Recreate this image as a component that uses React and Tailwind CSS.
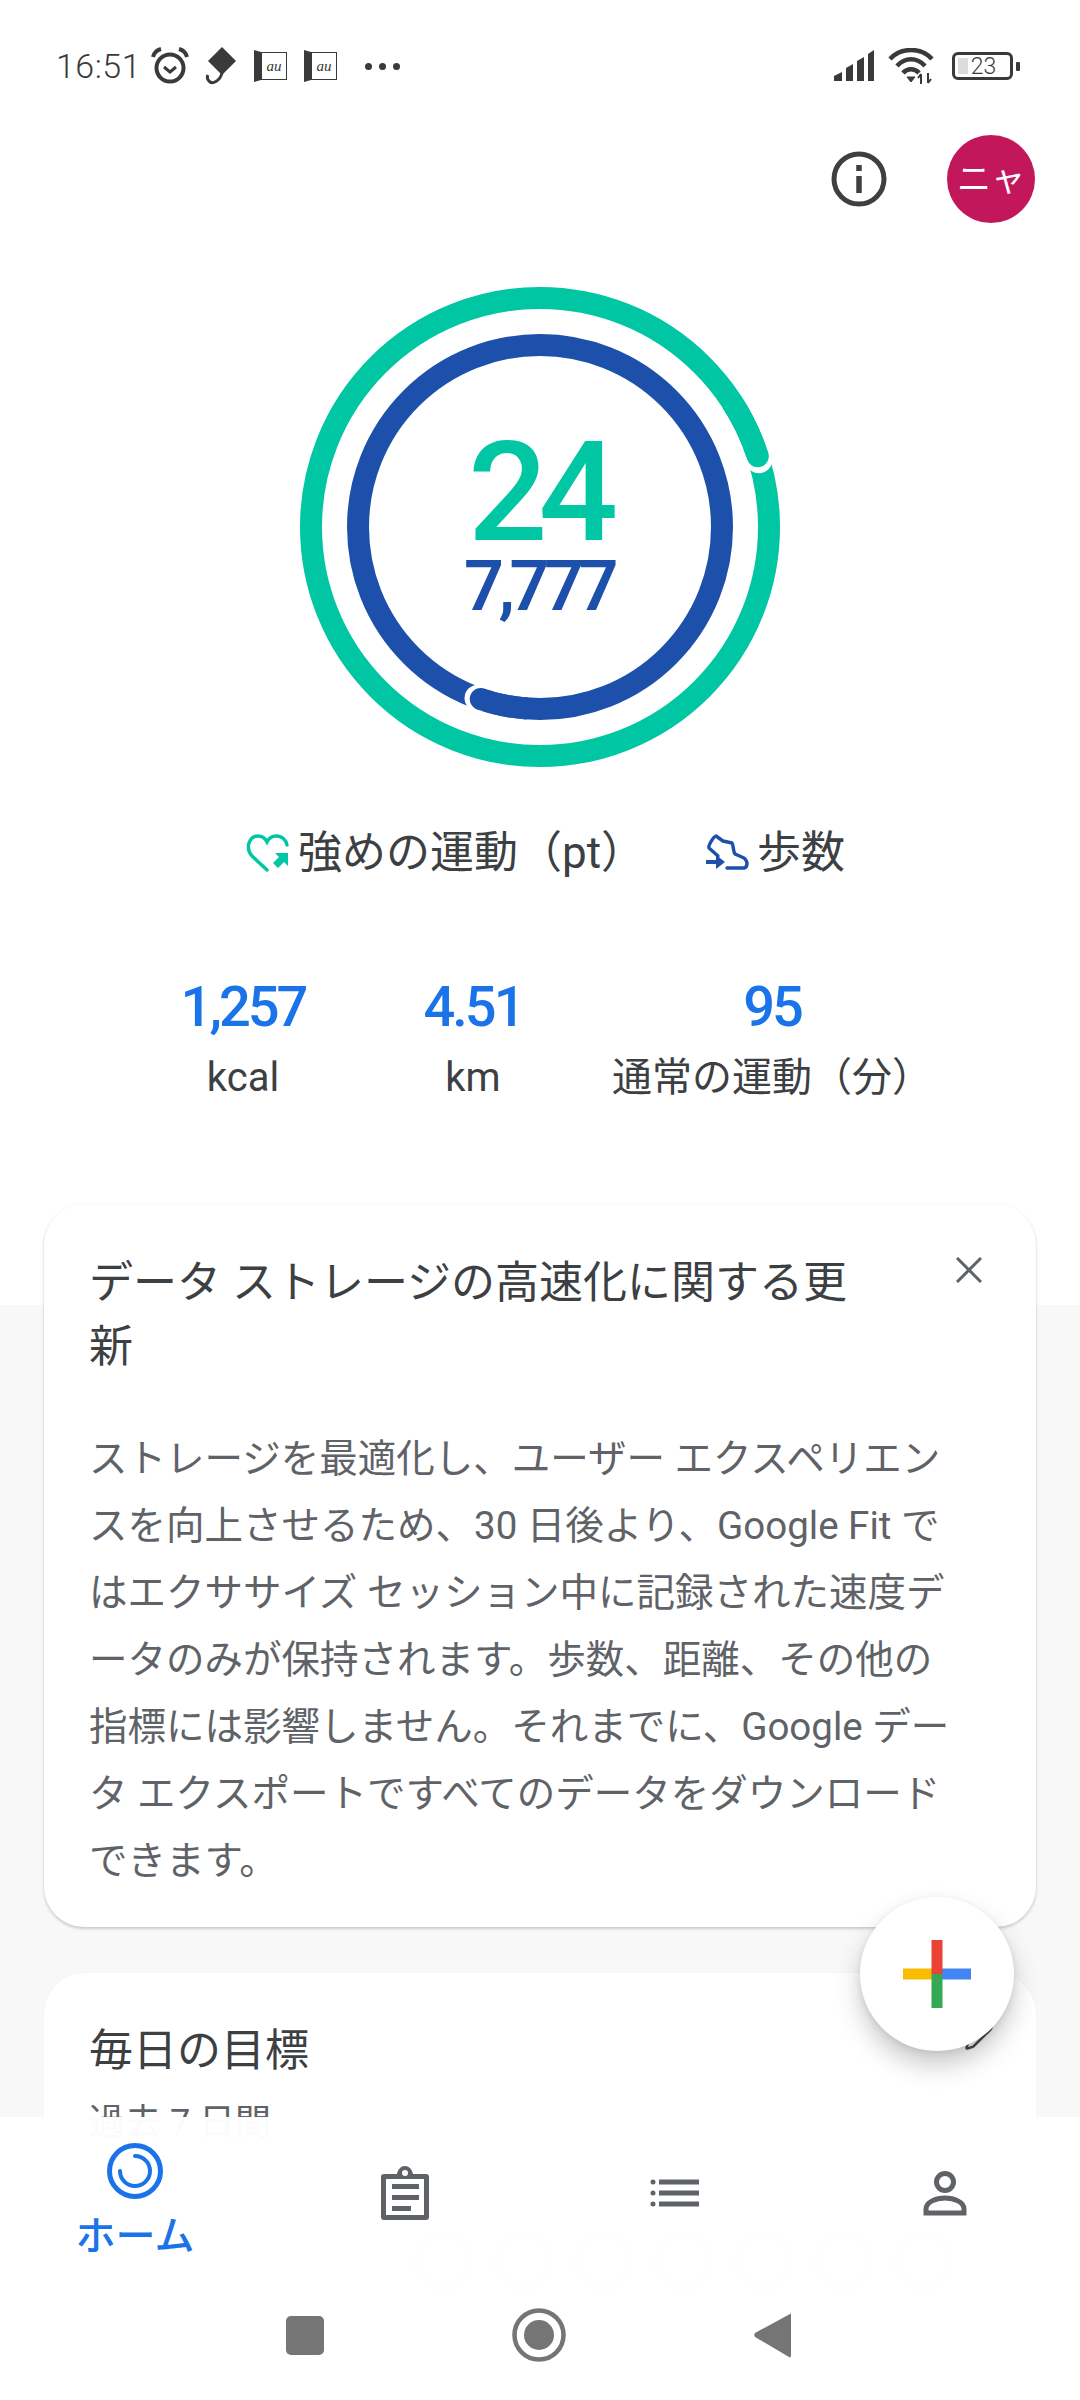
import React from 'react';
import { Pencil } from 'lucide-react';

const pt = (r, deg) => {
  const a = (deg * Math.PI) / 180;
  return [240 + r * Math.sin(a), 240 - r * Math.cos(a)];
};

// ring that has gone past its goal: full circle plus a rounded head with a white halo
function RingTrack({ r, head, color }) {
  const [hx, hy] = pt(r, head);
  const [ox, oy] = pt(r, head + 0.9);
  const [tx, ty] = pt(r, head - 15);
  return (
    <>
      <circle cx="240" cy="240" r={r} fill="none" stroke={color} strokeWidth="22" />
      <circle cx={ox} cy={oy} r="13.5" fill="#fff" />
      <path d={`M${tx} ${ty}A${r} ${r} 0 0 1 ${hx} ${hy}`} fill="none" stroke={color} strokeWidth="22" />
      <circle cx={hx} cy={hy} r="11" fill={color} />
    </>
  );
}

function Ring() {
  return (
    <svg width="480" height="480" viewBox="0 0 480 480" className="block">
      <RingTrack r={229} head={72} color="#00c6a4" />
      <RingTrack r={182} head={199} color="#1c50aa" />
    </svg>
  );
}

function SimIcon() {
  return (
    <div className="flex h-[28px] w-[33px] items-stretch">
      <svg width="7" height="32" viewBox="0 0 7 32" className="-mt-[2px] shrink-0">
        <path d="M0 0L7 2V30L0 32Z" fill="#3a3a3a" />
      </svg>
      <div className="flex flex-1 items-center justify-center border-[1.5px] border-[#3a3a3a] bg-white font-['Liberation_Serif',serif] text-[15px] italic leading-none text-[#3a3a3a]">
        au
      </div>
    </div>
  );
}

function StatusBar() {
  return (
    <div className="flex h-[36px] items-center pl-[56px] pr-[60px] mt-[48px] text-[#3a3a3a]">
      <span className="w-[94px] text-[34px] font-light leading-none tracking-[0.5px]">16:51</span>
      <svg width="40" height="38" viewBox="0 0 40 38" className="shrink-0" fill="none" stroke="#3a3a3a">
        <circle cx="20" cy="21" r="13.5" strokeWidth="4" />
        <path d="M14 20l6 5 6-5" strokeWidth="3" />
        <path d="M3 10C4 6 7 3 11 2M37 10C36 6 33 3 29 2" strokeWidth="4" />
      </svg>
      <svg width="32" height="38" viewBox="0 0 32 38" className="ml-[15px] shrink-0">
        <path d="M17 0L31 14 17 28 3 14Z" fill="#3a3a3a" />
        <path d="M17 26C15 34 7 38 4 34 2 32 2 30 3 28" fill="none" stroke="#3a3a3a" strokeWidth="3" />
      </svg>
      <div className="ml-[17px]"><SimIcon /></div>
      <div className="ml-[17px]"><SimIcon /></div>
      <div className="ml-[28px] flex gap-[7px]">
        <span className="h-[7px] w-[7px] rounded-full bg-[#3a3a3a]" />
        <span className="h-[7px] w-[7px] rounded-full bg-[#3a3a3a]" />
        <span className="h-[7px] w-[7px] rounded-full bg-[#3a3a3a]" />
      </div>
      <div className="flex-1" />
      <svg width="42" height="32" viewBox="0 0 42 32" className="shrink-0">
        <path d="M1 31V26L9 22V31ZM13 31V18L20 14V31ZM24 31V11L31 7V31ZM35 31V4L41 0V31Z" fill="#3a3a3a" />
      </svg>
      <svg width="48" height="36" viewBox="0 0 48 36" className="ml-[13px] shrink-0" fill="none" stroke="#3a3a3a" strokeWidth="4.5">
        <path d="M2 11C13 -1 33 -1 44 11" />
        <path d="M9 18C17 9 29 9 37 18" />
        <path d="M15 25C19 20 27 20 31 25" />
        <path d="M19 29L23 34 27 29Z" fill="#3a3a3a" strokeWidth="1" />
        <path d="M33 36V26M33 26l-3 4M40 25V35M40 35l3-4" strokeWidth="2" />
      </svg>
      <div className="ml-[16px] flex items-center">
        <div className="relative flex h-[28px] w-[61px] items-center justify-center rounded-[6px] border-[3px] border-[#3a3a3a]">
          <span className="absolute bottom-[3px] left-[3px] top-[3px] w-[10px] bg-[#dcdcdc]" />
          <span className="relative pl-[2px] text-[23px] font-light leading-none">23</span>
        </div>
        <span className="ml-[3px] h-[9px] w-[4px] rounded-[1px] bg-[#3a3a3a]" />
      </div>
    </div>
  );
}

function HeartIcon() {
  return (
    <svg width="44" height="40" viewBox="0 0 44 40" className="shrink-0">
      <path
        d="M21 37L6 23C-1 15 3 3 12 3c4 0 7 2 9 6 2-4 5-6 9-6 6 0 10 4 11 9"
        fill="none"
        stroke="#00c6a4"
        strokeWidth="3.4"
        strokeLinecap="round"
      />
      <path d="M29 20H42V33L38 29 32 35 27 30 33 24Z" fill="#00c6a4" />
    </svg>
  );
}

function StepsIcon() {
  return (
    <svg width="44" height="40" viewBox="0 0 44 40" className="shrink-0" fill="none">
      <path
        d="M13 23L4 15C3 13 8 4 11 3L18 8 27 10C29 14 28 19 30 21L39 25C43 28 43 34 39 35H22"
        stroke="#1c50aa"
        strokeWidth="3.4"
        strokeLinejoin="round"
        strokeLinecap="round"
      />
      <path d="M1 29H12" stroke="#1c50aa" strokeWidth="4" />
      <path d="M11 22L20 29 11 36Z" fill="#1c50aa" />
    </svg>
  );
}

function Stat({ value, label, width }) {
  return (
    <div className={`flex flex-col items-center ${width}`}>
      <div className="text-[56px] font-medium leading-[60px] tracking-[-3px] text-[#1a73e8]">{value}</div>
      <div className="mt-[19px] text-[40px] leading-[44px] text-[#3c4043]">{label}</div>
    </div>
  );
}

const bodyLines = [
  'ストレージを最適化し、ユーザー エクスペリエン',
  'スを向上させるため、30 日後より、Google Fit で',
  'はエクササイズ セッション中に記録された速度デ',
  'ータのみが保持されます。歩数、距離、その他の',
  '指標には影響しません。それまでに、Google デー',
  'タ エクスポートですべてのデータをダウンロード',
  'できます。',
];

function UpdateCard() {
  return (
    <div className="relative mx-[44px] -mt-[101px] rounded-[40px] bg-white pb-[33px] pl-[45px] pr-[30px] pt-[47px] shadow-[0_2px_3px_rgba(60,64,67,0.24),0_0_2px_rgba(60,64,67,0.06)]">
      <div className="flex items-start justify-between">
        <div className="text-[44px] leading-[64px] text-[#3c4043]">
          <div>データ ストレージの高速化に関する更</div>
          <div>新</div>
        </div>
        <svg width="26" height="26" viewBox="0 0 26 26" className="mr-[24px] mt-[6px] shrink-0" stroke="#5f6368" strokeWidth="3">
          <path d="M1 1L25 25M25 1L1 25" />
        </svg>
      </div>
      <div className="mt-[46px] text-[38.5px] leading-[67px] text-[#5f6368]">
        {bodyLines.map((line) => (
          <div key={line} className="whitespace-nowrap">{line}</div>
        ))}
      </div>
    </div>
  );
}

function GoalsCard() {
  return (
    <div className="relative mx-[44px] mt-[46px] h-[400px] rounded-[40px] bg-white pl-[45px] pr-[42px] pt-[48px] shadow-[0_0_2px_rgba(60,64,67,0.06)]">
      <div className="flex items-start justify-between">
        <div className="text-[44px] leading-[60px] text-[#3c4043]">毎日の目標</div>
        <Pencil className="h-[30px] w-[30px] text-[#3c4043]" />
      </div>
      <div className="mt-[20px] text-[36px] leading-[44px] text-[#5f6368]">過去 7 日間</div>
      <div className="ml-[324px] mt-[86px] flex gap-[20px]">
        {[0, 1, 2, 3, 4, 5, 6].map((d) => (
          <span key={d} className="h-[60px] w-[60px] shrink-0 rounded-full border-[8px] border-[#e4e6e8]" />
        ))}
      </div>
    </div>
  );
}

function Fab() {
  return (
    <div className="absolute bottom-[349px] right-[66px] flex h-[154px] w-[154px] items-center justify-center rounded-full bg-white shadow-[0_14px_24px_rgba(60,64,67,0.28),0_2px_6px_rgba(60,64,67,0.12)]">
      <svg width="68" height="68" viewBox="0 0 68 68">
        <rect x="0" y="28.5" width="34" height="11" fill="#fbbc04" />
        <rect x="34" y="28.5" width="34" height="11" fill="#4285f4" />
        <rect x="28.5" y="34" width="11" height="34" fill="#34a853" />
        <rect x="28.5" y="0" width="11" height="34" fill="#ea4335" />
      </svg>
    </div>
  );
}

function BottomNav() {
  return (
    <div className="absolute bottom-0 left-0 right-0 h-[283px] bg-white/[0.975]">
      <div className="grid h-[178px] grid-cols-4">
        <div className="flex flex-col items-center pt-[24px]">
          <svg width="60" height="60" viewBox="0 0 60 60" fill="none" stroke="#1a73e8" strokeWidth="5">
            <circle cx="30" cy="30" r="25.5" />
            <path d="M30 15A15 15 0 1 1 15 30" strokeWidth="4" strokeLinecap="round" />
          </svg>
          <div className="mt-[14px] text-[40px] font-medium leading-[44px] text-[#1a73e8]">ホーム</div>
        </div>
        <div className="flex justify-center pt-[46px]">
          <svg width="60" height="60" viewBox="0 0 60 60">
            <path d="M9 11H22C23 6 26 3 30 3S37 6 38 11H51C53 11 54 12 54 14V54C54 56 53 57 51 57H9C7 57 6 56 6 54V14C6 12 7 11 9 11Z" fill="#5f6368" />
            <rect x="11" y="16" width="38" height="36" fill="#fff" />
            <circle cx="30" cy="10" r="3" fill="#fff" />
            <rect x="17" y="21" width="27" height="5" fill="#5f6368" />
            <rect x="17" y="32" width="27" height="5" fill="#5f6368" />
            <rect x="17" y="43" width="19" height="5" fill="#5f6368" />
          </svg>
        </div>
        <div className="flex justify-center pt-[46px]">
          <svg width="60" height="60" viewBox="0 0 60 60" fill="#5f6368">
            <circle cx="8" cy="19" r="2.5" />
            <circle cx="8" cy="30" r="2.5" />
            <circle cx="8" cy="41" r="2.5" />
            <rect x="14" y="16.5" width="40" height="5" />
            <rect x="14" y="27.5" width="40" height="5" />
            <rect x="14" y="38.5" width="40" height="5" />
          </svg>
        </div>
        <div className="flex justify-center pt-[46px]">
          <svg width="60" height="60" viewBox="0 0 60 60" fill="none" stroke="#5f6368" strokeWidth="5">
            <circle cx="30" cy="19" r="8.5" />
            <path d="M11 50V46C11 39 21 35 30 35S49 39 49 46V50Z" />
          </svg>
        </div>
      </div>
      <div className="flex h-[80px] items-center justify-center gap-[188px] pr-[4px]">
        <span className="h-[39px] w-[38px] rounded-[5px] bg-[#757575]" />
        <svg width="54" height="54" viewBox="0 0 54 54">
          <circle cx="27" cy="27" r="24.5" fill="none" stroke="#757575" strokeWidth="4.5" />
          <circle cx="27" cy="27" r="15" fill="#757575" />
        </svg>
        <svg width="37" height="46" viewBox="0 0 37 46">
          <path d="M36 2C37 1 37 2 37 3V43C37 45 36 46 35 45L1 25C0 24 0 22 1 21Z" fill="#757575" />
        </svg>
      </div>
    </div>
  );
}

export default function App() {
  return (
    <div className="relative flex h-[2400px] w-[1080px] flex-col overflow-hidden bg-white font-['Roboto','Noto_Sans_CJK_JP',sans-serif]">
      <StatusBar />

      <div className="mt-[51px] flex items-center justify-end gap-[60px] pr-[45px]">
        <svg width="56" height="56" viewBox="0 0 56 56" fill="none" stroke="#3c4043">
          <circle cx="28" cy="28" r="25" strokeWidth="5" />
          <path d="M28 25V42" strokeWidth="5.5" />
          <path d="M28 14V20" strokeWidth="5.5" />
        </svg>
        <div className="flex h-[88px] w-[88px] items-center justify-center rounded-full bg-[#c2185b] text-[34px] leading-none text-white">
          ニャ
        </div>
      </div>

      <div className="relative mx-auto mt-[64px]">
        <Ring />
        <div className="absolute inset-0 flex flex-col items-center pr-[3px] pt-[150px]">
          <div className="text-[140px] font-medium leading-[110px] tracking-[-9px] text-[#00c6a4]">24</div>
          <div className="mt-[4px] text-[70px] font-semibold leading-[70px] tracking-[-5.5px] text-[#1c50aa]">7,777</div>
        </div>
      </div>

      <div className="mt-[58px] flex h-[56px] items-center pl-[246px]">
        <HeartIcon />
        <span className="ml-[8px] text-[44px] leading-[56px] text-[#3c4043]">強めの運動（pt）</span>
        <div className="ml-[60px]"><StepsIcon /></div>
        <span className="ml-[8px] text-[44px] leading-[56px] text-[#3c4043]">歩数</span>
      </div>

      <div className="mt-[96px] flex pl-[123px]">
        <Stat value="1,257" label="kcal" width="w-[240px]" />
        <Stat value="4.51" label="km" width="w-[220px]" />
        <Stat value="95" label="通常の運動（分）" width="w-[378px]" />
      </div>

      <div className="mt-[205px] flex-1 bg-[#f8f8f9]">
        <UpdateCard />
        <GoalsCard />
      </div>

      <BottomNav />
      <Fab />
    </div>
  );
}
